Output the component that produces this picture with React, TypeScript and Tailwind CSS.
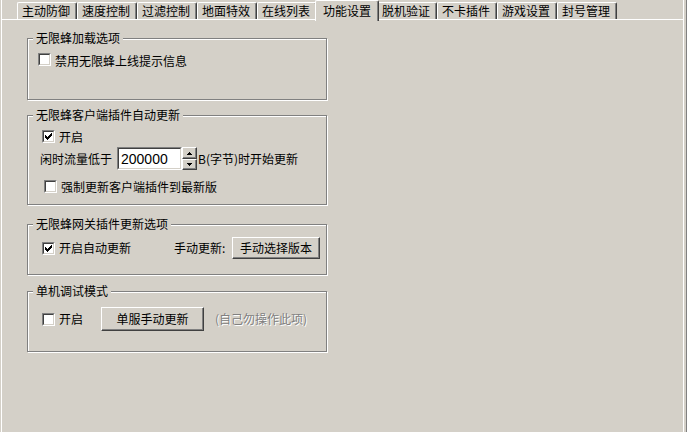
import type { ReactNode } from 'react';

const tabs = ['主动防御', '速度控制', '过滤控制', '地面特效', '在线列表', '功能设置', '脱机验证', '不卡插件', '游戏设置', '封号管理'];
const ACTIVE = 5;

function Checkbox({ checked = false }: { checked?: boolean }) {
  return (
    <span className="flex w-[13px] h-[13px] shrink-0 border border-t-[#808080] border-l-[#808080] border-b-white border-r-white">
      <span className="flex items-center justify-center w-[11px] h-[11px] bg-white border border-t-[#404040] border-l-[#404040] border-b-[#d4d0c8] border-r-[#d4d0c8]">
        {checked && (
          <svg width="7" height="7" viewBox="0 0 7 7">
            <path d="M0 2h1v1h1v1h1V3h1V2h1V1h1V0h1v3H6v1H5v1H4v1H3v1H2V6H1V5H0z" fill="#000" />
          </svg>
        )}
      </span>
    </span>
  );
}

function Button({ children, className = '' }: { children: ReactNode; className?: string }) {
  return (
    <div
      className={`flex items-center justify-center bg-[#d4d0c8] border border-t-white border-l-white border-b-[#404040] border-r-[#404040] shadow-[inset_-1px_-1px_0_#808080] ${className}`}
    >
      {children}
    </div>
  );
}

function GroupBox({ title, className = '', children }: { title: string; className?: string; children: ReactNode }) {
  return (
    <div
      className={`relative ml-[25px] w-[300px] border border-[#808080] shadow-[1px_1px_0_#fff,inset_1px_1px_0_#fff] ${className}`}
    >
      <span className="absolute left-[5px] top-[-9px] px-[3px] bg-[#d4d0c8] leading-[16px]">{title}</span>
      {children}
    </div>
  );
}

function Arrow({ up }: { up?: boolean }) {
  return (
    <svg width="5" height="3" viewBox="0 0 5 3">
      {up ? <path d="M2 0h1v1h1v1h1v1H0V2h1V1h1z" fill="#000" /> : <path d="M0 0h5v1H4v1H3v1H2V2H1V1H0z" fill="#000" />}
    </svg>
  );
}

export default function App() {
  return (
    <div
      className="w-[687px] h-[432px] bg-[#d4d0c8] overflow-hidden border-r border-[#808080] text-[12px] text-black"
      style={{ fontFamily: '"Noto Sans CJK SC", "Liberation Sans", sans-serif' }}
    >
      <div className="ml-[1px] w-[683px] h-full border-l border-r border-white">
        {/* Tabs */}
        <div className="flex pl-[15px] pt-[2px] h-[20px] border-b border-white">
          {tabs.map((t, i) =>
            i === ACTIVE ? (
              <div
                key={t}
                className="relative z-10 -mx-[2px] -mt-[2px] h-[21px] w-[64px] pl-[7px] flex items-center bg-[#d4d0c8] border-l border-t border-white border-r border-r-[#404040] shadow-[inset_-1px_0_0_#808080] rounded-t-[2px]"
              >
                {t}
              </div>
            ) : (
              <div
                key={t}
                className="h-[17px] w-[60px] pl-[4px] flex items-center border-l border-t border-white border-r border-r-[#404040] shadow-[inset_-1px_0_0_#808080] rounded-t-[2px] leading-none"
              >
                {t}
              </div>
            )
          )}
        </div>

        {/* Panel */}
        <div className="flex flex-col pt-[18px]">
          <GroupBox title="无限蜂加载选项" className="h-[62px]">
            <div className="flex items-center gap-[4px] ml-[10px] mt-[14px] h-[13px]">
              <Checkbox />
              <span className="mt-[2px]">禁用无限蜂上线提示信息</span>
            </div>
          </GroupBox>

          <GroupBox title="无限蜂客户端插件自动更新" className="mt-[15px] h-[90px]">
            <div className="flex items-center gap-[4px] ml-[14px] mt-[14px] h-[13px]">
              <Checkbox checked />
              <span>开启</span>
            </div>
            <div className="flex items-center ml-[12px] mt-[4px] h-[23px]">
              <span className="w-[77px]">闲时流量低于</span>
              <div className="flex items-center w-[65px] h-[23px] bg-white border border-t-[#808080] border-l-[#808080] border-b-white border-r-white">
                <div className="flex items-center w-full h-full pl-[2px] border border-t-[#404040] border-l-[#404040] border-b-[#d4d0c8] border-r-[#d4d0c8] text-[14px] leading-none" style={{ fontFamily: '"Liberation Sans", sans-serif' }}>
                  200000
                </div>
              </div>
              <div className="flex flex-col w-[15px] h-[23px]">
                <Button className="h-[12px]">
                  <Arrow up />
                </Button>
                <Button className="h-[11px]">
                  <Arrow />
                </Button>
              </div>
              <span className="ml-[1px]">B(字节)时开始更新</span>
            </div>
            <div className="flex items-center gap-[4px] ml-[16px] mt-[10px] h-[13px]">
              <Checkbox />
              <span>强制更新客户端插件到最新版</span>
            </div>
          </GroupBox>

          <GroupBox title="无限蜂网关插件更新选项" className="mt-[19px] h-[51px]">
            <div className="flex items-center ml-[14px] mt-[12px] h-[22px]">
              <Checkbox checked />
              <span className="ml-[4px] w-[115px]">开启自动更新</span>
              <span className="w-[58px]">手动更新:</span>
              <Button className="w-[88px] h-[22px]">手动选择版本</Button>
            </div>
          </GroupBox>

          <GroupBox title="单机调试模式" className="mt-[16px] h-[61px]">
            <div className="flex items-center ml-[14px] mt-[15px] h-[24px]">
              <Checkbox />
              <span className="ml-[4px] w-[42px]">开启</span>
              <Button className="w-[103px] h-[24px]">单服手动更新</Button>
              <span className="ml-[11px] text-[#808080] [text-shadow:1px_1px_0_#fff]">(自己勿操作此项)</span>
            </div>
          </GroupBox>
        </div>
      </div>
    </div>
  );
}
